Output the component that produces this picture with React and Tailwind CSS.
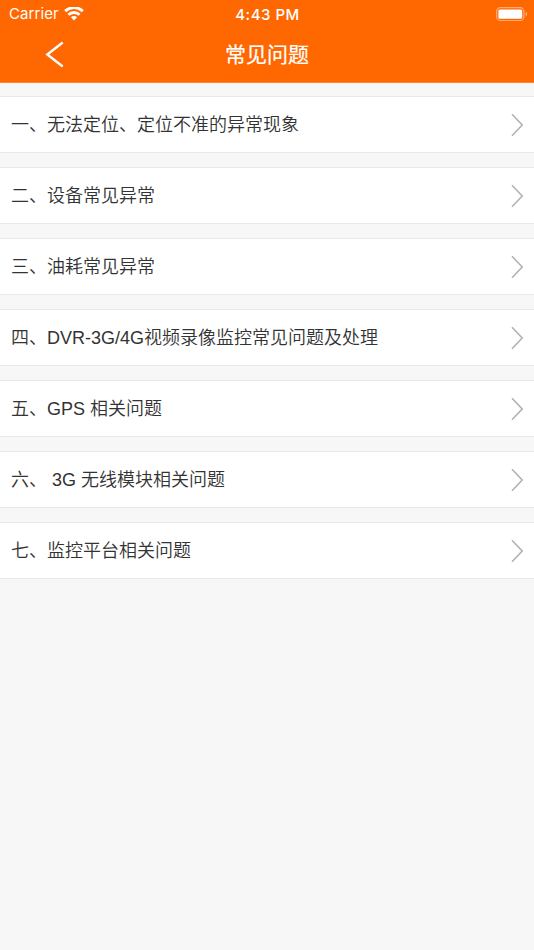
import React from 'react';

const questions = [
    { id: 1, title: '一、无法定位、定位不准的异常现象' },
    { id: 2, title: '二、设备常见异常' },
    { id: 3, title: '三、油耗常见异常' },
    { id: 4, title: '四、DVR-3G/4G视频录像监控常见问题及处理' },
    { id: 5, title: '五、GPS 相关问题' },
    { id: 6, title: '六、 3G 无线模块相关问题' },
    { id: 7, title: '七、监控平台相关问题' }
];

const WifiIcon = () => (
    <svg width="20" height="15" viewBox="0 0 20 15" fill="none" stroke="white" strokeWidth="2.9">
        <path d="M1.2 4.1 C6.2 -0.5 13.8 -0.5 18.8 4.1" />
        <path d="M4.4 7.7 C7.6 4.8 12.4 4.8 15.6 7.7" />
        <path d="M6.9 10.2 C8.7 8.6 11.3 8.6 13.1 10.2 L10 13.4 Z" fill="white" stroke="none" />
    </svg>
);

const BatteryIcon = () => (
    <svg width="32" height="15" viewBox="0 0 32 15">
        <rect x="0.7" y="0.7" width="27.2" height="12.8" rx="3.6" fill="none" stroke="white" strokeOpacity="0.45" strokeWidth="1.2" />
        <rect x="2.4" y="2.4" width="23.8" height="9.4" rx="1.6" fill="white" />
        <path d="M29.6 4.8 C31.6 5.5 31.6 8.7 29.6 9.4 Z" fill="white" fillOpacity="0.5" />
    </svg>
);

const StatusBar = () => (
    <div className="grid grid-cols-3 items-center h-[27px] pl-[9px] pr-[6px] font-[Inter,sans-serif] text-white">
        <div className="flex items-center gap-[5px]">
            <span className="text-[15px] leading-7 tracking-[0.1px]">Carrier</span>
            <WifiIcon />
        </div>
        <span className="pr-[2px] text-center text-[15px] leading-[27px] font-medium tracking-[0.5px]">4:43 PM</span>
        <div className="flex justify-end">
            <BatteryIcon />
        </div>
    </div>
);

const App = () => {
    return (
        <div className="min-h-[950px] bg-[#f7f7f7] font-['Liberation_Sans','Noto_Sans_CJK_SC',sans-serif]">
            <header className="h-[83px] bg-[#ff6700] border-b border-[#ff8533] text-white">
                <StatusBar />
                <div className="grid grid-cols-3 items-center h-[54px]">
                    <button className="ml-[45px] w-5 h-7">
                        <svg width="20" height="28" viewBox="0 0 20 28" fill="none" stroke="white" strokeWidth="2.4">
                            <path d="M17.7 1.5 L2.3 13.5 L17.7 25.5" />
                        </svg>
                    </button>
                    <h1 className="pt-px text-center text-[21px] leading-[54px] font-normal [-webkit-text-stroke:0.2px_white]">常见问题</h1>
                </div>
            </header>

            <ul className="flex flex-col gap-[14px] pt-[13px]">
                {questions.map((question) => (
                    <li key={question.id} className="flex items-center justify-between h-[57px] pl-[11px] pr-[10px] bg-white border-y border-[#e9e9e9]">
                        <span className="text-[18px] leading-[56px] font-[350] text-[#333] whitespace-pre">{question.title}</span>
                        <svg width="14" height="25" viewBox="0 0 14 25" fill="none" stroke="#b2b2b2" strokeWidth="1.6">
                            <path d="M2 2.2 L12.2 13 L2 23.8" />
                        </svg>
                    </li>
                ))}
            </ul>
        </div>
    );
};

export default App;
